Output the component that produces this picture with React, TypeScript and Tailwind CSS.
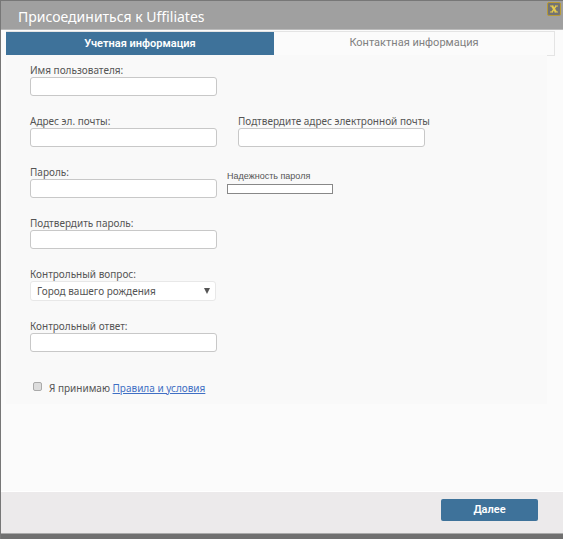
import { useId, useState } from "react";
import type { ReactNode } from "react";

const INPUT_CLASS =
  "block h-[19px] w-[187px] rounded-[3px] border border-[#c8c8c8] bg-white px-1 text-[10px] outline-none";

type Tab = "account" | "contact";

function Field({ label, type = "text" }: { label: string; type?: string }) {
  const id = useId();
  return (
    <div>
      <label htmlFor={id} className="block leading-[14px] whitespace-nowrap">
        {label}
      </label>
      <input id={id} type={type} className={INPUT_CLASS} />
    </div>
  );
}

function TabButton({
  active,
  onClick,
  children,
}: {
  active: boolean;
  onClick: () => void;
  children: ReactNode;
}) {
  return (
    <button
      type="button"
      role="tab"
      aria-selected={active}
      onClick={onClick}
      className={
        active
          ? "h-6 w-[268px] bg-[#3e729a] font-[Roboto,sans-serif] text-[11px] font-semibold text-white"
          : "h-6 flex-1 border-r border-b border-[#e4e4e4] font-[Roboto,sans-serif] text-[11px] text-[#808080]"
      }
    >
      {children}
    </button>
  );
}

export default function App() {
  const [tab, setTab] = useState<Tab>("account");

  return (
    <div className="flex min-h-screen flex-col border-t border-l border-[#777777] bg-[#707070] font-['Noto_Sans','Open_Sans',sans-serif] text-[10px] text-[#555555]">
      <header className="flex h-[29px] items-start justify-between border-b border-[#bbbbbb] bg-[#a0a0a0] pl-[17px]">
        <h1 className="pt-1 text-[14px] leading-6 text-white">Присоединиться к Uffiliates</h1>
        <button
          type="button"
          aria-label="Закрыть"
          className="mt-px mr-[2px] flex size-[14px] items-center justify-center rounded-xs border border-[#b89a35] bg-[#737373]"
        >
          <svg viewBox="0 0 8 8" className="size-2" fill="none" stroke="#e6cb4c" aria-hidden="true">
            <path d="M2 1 6 7" strokeWidth="2.2" />
            <path d="M6 1 2 7" strokeWidth="1.4" />
            <path d="M0 1h3.5M5 1h3M0 7h3M4.5 7H8" />
          </svg>
        </button>
      </header>

      <main className="flex-1 border-b border-white bg-[#fbfbfb] pt-px pr-2 pl-[5px]">
        <div role="tablist" className="flex border-t border-[#e4e4e4]">
          <TabButton active={tab === "account"} onClick={() => setTab("account")}>
            Учетная информация
          </TabButton>
          <TabButton active={tab === "contact"} onClick={() => setTab("contact")}>
            Контактная информация
          </TabButton>
        </div>

        <form className="relative -mt-px mr-2 bg-[#f9f9f9] pb-2 pl-6">
          <div className="flex flex-col gap-[18px] pt-2">
            <Field label="Имя пользователя:" />
            <div className="flex gap-[21px]">
              <Field label="Адрес эл. почты:" />
              <Field label="Подтвердите адрес электронной почты" />
            </div>
            <div className="flex items-start gap-[10px]">
              <Field label="Пароль:" type="password" />
              <div className="pt-[3px] font-['Liberation_Sans',sans-serif] text-[9px]">
                <div id="strength" className="leading-4">
                  Надежность пароля
                </div>
                <div
                  role="meter"
                  aria-labelledby="strength"
                  aria-valuenow={0}
                  className="h-[10px] w-[106px] border border-[#888888] bg-white"
                />
              </div>
            </div>
            <Field label="Подтвердить пароль:" type="password" />
            <div>
              <label htmlFor="question" className="block leading-[14px]">
                Контрольный вопрос:
              </label>
              <div className="relative w-[186px]">
                <select
                  id="question"
                  className="block h-5 w-full appearance-none rounded-[3px] border border-[#e8e8e8] bg-white pr-5 pl-[6px] text-[10px] leading-4 outline-none"
                >
                  <option>Город вашего рождения</option>
                </select>
                <svg
                  viewBox="0 0 6 6"
                  className="pointer-events-none absolute top-[7px] right-[6px] size-[6px]"
                  fill="#555555"
                  aria-hidden="true"
                >
                  <path d="M0 0h6L3 6z" />
                </svg>
              </div>
            </div>
            <Field label="Контрольный ответ:" />
          </div>

          <div className="mt-7 flex h-4 items-center gap-[7px] pl-[3px]">
            <input
              id="terms"
              type="checkbox"
              className="mb-1 size-[9px] appearance-none rounded-xs border border-[#aaaaaa] bg-[#dddddd] checked:bg-[#3e729a]"
            />
            <label htmlFor="terms">
              Я принимаю{" "}
              <a href="#terms" className="text-[#3f6fc4] underline">
                Правила и условия
              </a>
            </label>
          </div>
        </form>
      </main>

      <footer className="mb-[5px] flex h-[42px] justify-end border-b border-[#aaaaaa] bg-[#eceaeb] pt-[7px] pr-[25px]">
        <button
          type="button"
          className="h-[22px] w-[97px] rounded-xs bg-[#3e729a] font-[Roboto,sans-serif] text-[11px] font-semibold text-white"
        >
          Далее
        </button>
      </footer>
    </div>
  );
}
